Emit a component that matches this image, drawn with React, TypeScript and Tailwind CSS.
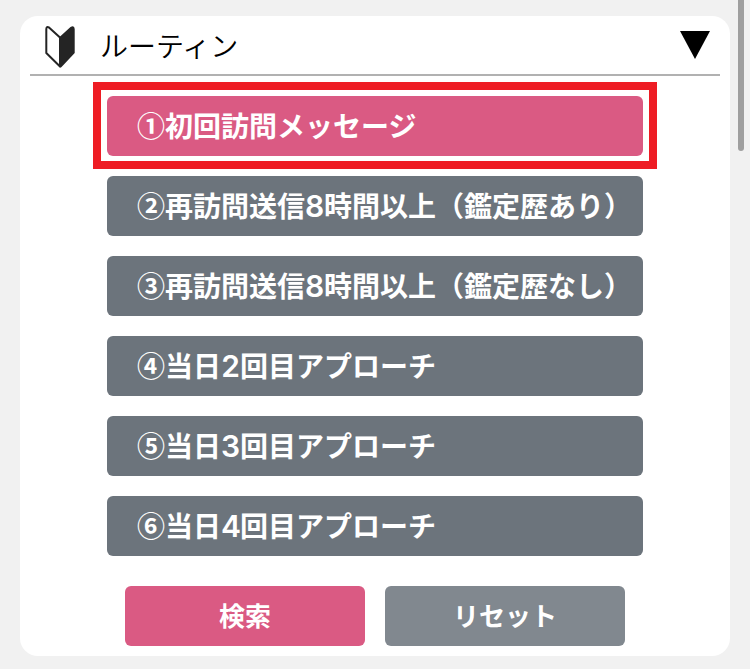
const items = [
  ["①", "初回訪問メッセージ", "", ""],
  ["②", "再訪問送信", "8", "時間以上（鑑定歴あり）"],
  ["③", "再訪問送信", "8", "時間以上（鑑定歴なし）"],
  ["④", "当日", "2", "回目アプローチ"],
  ["⑤", "当日", "3", "回目アプローチ"],
  ["⑥", "当日", "4", "回目アプローチ"],
];

export default function App() {
  return (
    <div className="flex h-[669px] w-[750px] bg-[#f1f1f1] pl-5 font-['Noto_Sans_CJK_JP',sans-serif]">
      <main className="mt-4 h-[640px] w-[710px] shrink-0 rounded-[18px] bg-white px-[10px]">
        <header className="flex h-[60px] items-center border-b-2 border-[#b1b1b1] pl-[15px] pr-[10px]">
          <svg className="mt-1" width="31" height="42" viewBox="0 0 31 42">
            <path d="M1.3 3Q1.5 .2 4 1.5L15 11.5V40.5L1.3 27Z" fill="white" stroke="#242424" strokeWidth="2" strokeLinejoin="round" />
            <path d="M14 11.5L25.5 1Q29.5 -1 29.7 3V27L17 40.5Q15.5 42.3 14 40.5Z" fill="#242424" />
          </svg>
          <h1 className="ml-6 text-[28px] font-[350] leading-none text-black">ルーティン</h1>
          <svg className="ml-auto" width="30" height="28"><path d="M0 0H30L15 28Z" /></svg>
        </header>
        <div className="mt-5 flex flex-col items-center gap-5">
          {items.map(([mark, before, digit, after], i) => (
            <button key={mark} className={`relative flex h-[60px] w-[536px] items-center whitespace-nowrap rounded-[6px] pb-[2px] pl-[30px] text-[28px] font-bold leading-none text-white ${i === 0 ? "bg-[#da5a83]" : "bg-[#6c747c]"}`}>
              <span>{mark}</span>
              <span>{before}</span>
              {digit && <span className="w-[19px] pt-[2px] text-center font-['Inter',sans-serif] text-[30px] font-semibold">{digit}</span>}
              {after && <span>{after}</span>}
              {i === 0 && <span className="pointer-events-none absolute -left-[14px] -top-[14px] h-[87px] w-[564px] border-8 border-[#ee1c24]" />}
            </button>
          ))}
        </div>
        <div className="mt-[30px] flex justify-center gap-5 text-[26px] font-bold leading-none text-white">
          <button className="h-[60px] w-[240px] rounded-[6px] bg-[#da5a83] pb-[2px]">検索</button>
          <button className="h-[60px] w-[240px] rounded-[6px] bg-[#81888f] pb-[2px]">リセット</button>
        </div>
      </main>
      <div className="ml-2 h-[151px] w-[6px] rounded-b-full bg-[#9f9f9f]" />
    </div>
  );
}
